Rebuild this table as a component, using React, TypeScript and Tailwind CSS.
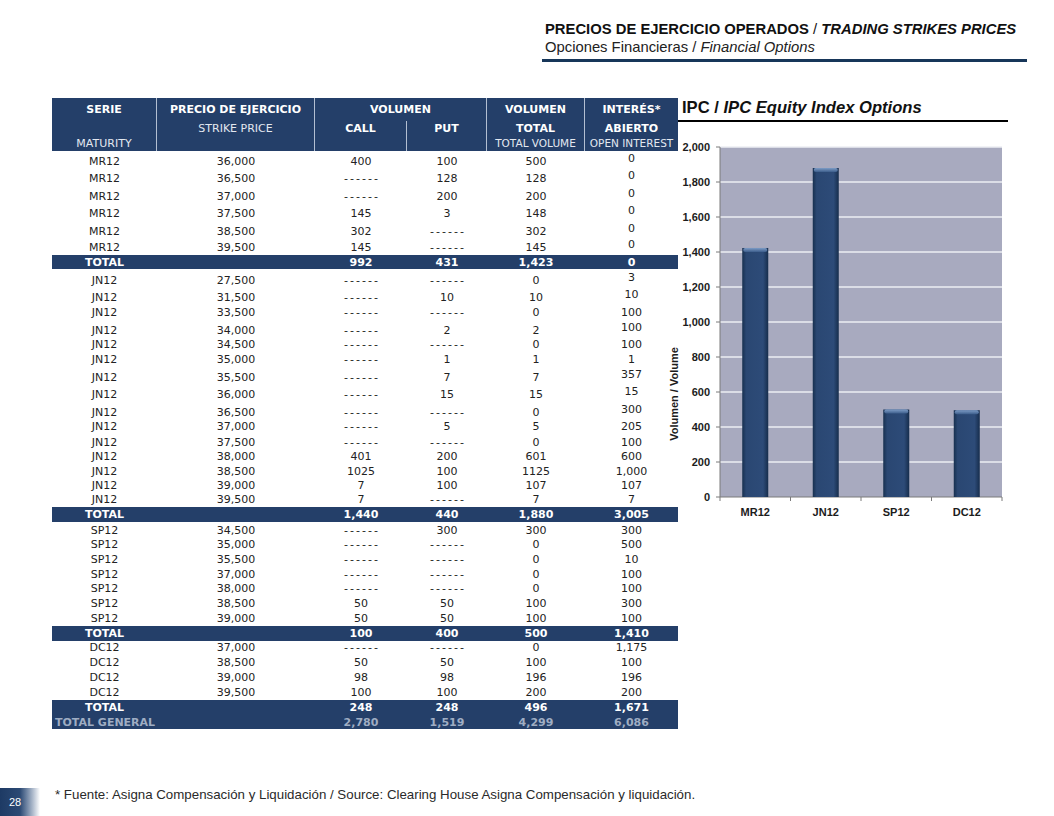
type Row = {
  strike: string;
  call: string;
  put: string;
  total: string;
  oi: string;
  h: string;
  up?: boolean;
};

type Section = {
  serie: string;
  rows: Row[];
  totals: [string, string, string, string];
  totalH: string;
};

const D = "------";

const sections: Section[] = [
  {
    serie: "MR12",
    totalH: "h-[14px]",
    totals: ["992", "431", "1,423", "0"],
    rows: [
      { strike: "36,000", call: "400", put: "100", total: "500", oi: "0", h: "h-[18px]", up: true },
      { strike: "36,500", call: D, put: "128", total: "128", oi: "0", h: "h-[17px]", up: true },
      { strike: "37,000", call: D, put: "200", total: "200", oi: "0", h: "h-[18px]", up: true },
      { strike: "37,500", call: "145", put: "3", total: "148", oi: "0", h: "h-[17px]", up: true },
      { strike: "38,500", call: "302", put: D, total: "302", oi: "0", h: "h-[18px]", up: true },
      { strike: "39,500", call: "145", put: D, total: "145", oi: "0", h: "h-[16px]", up: true },
    ],
  },
  {
    serie: "JN12",
    totalH: "h-[15px]",
    totals: ["1,440", "440", "1,880", "3,005"],
    rows: [
      { strike: "27,500", call: D, put: D, total: "0", oi: "3", h: "h-[19px]", up: true },
      { strike: "31,500", call: D, put: "10", total: "10", oi: "10", h: "h-[17px]", up: true },
      { strike: "33,500", call: D, put: D, total: "0", oi: "100", h: "h-[15px]" },
      { strike: "34,000", call: D, put: "2", total: "2", oi: "100", h: "h-[18px]", up: true },
      { strike: "34,500", call: D, put: D, total: "0", oi: "100", h: "h-[14px]" },
      { strike: "35,000", call: D, put: "1", total: "1", oi: "1", h: "h-[15px]" },
      { strike: "35,500", call: D, put: "7", total: "7", oi: "357", h: "h-[18px]", up: true },
      { strike: "36,000", call: D, put: "15", total: "15", oi: "15", h: "h-[17px]", up: true },
      { strike: "36,500", call: D, put: D, total: "0", oi: "300", h: "h-[18px]", up: true },
      { strike: "37,000", call: D, put: "5", total: "5", oi: "205", h: "h-[14px]" },
      { strike: "37,500", call: D, put: D, total: "0", oi: "100", h: "h-[16px]" },
      { strike: "38,000", call: "401", put: "200", total: "601", oi: "600", h: "h-[14px]" },
      { strike: "38,500", call: "1025", put: "100", total: "1125", oi: "1,000", h: "h-[15px]" },
      { strike: "39,000", call: "7", put: "100", total: "107", oi: "107", h: "h-[14px]" },
      { strike: "39,500", call: "7", put: D, total: "7", oi: "7", h: "h-[14px]" },
    ],
  },
  {
    serie: "SP12",
    totalH: "h-[15px]",
    totals: ["100", "400", "500", "1,410"],
    rows: [
      { strike: "34,500", call: D, put: "300", total: "300", oi: "300", h: "h-[16px]" },
      { strike: "35,000", call: D, put: D, total: "0", oi: "500", h: "h-[14px]" },
      { strike: "35,500", call: D, put: D, total: "0", oi: "10", h: "h-[15px]" },
      { strike: "37,000", call: D, put: D, total: "0", oi: "100", h: "h-[15px]" },
      { strike: "38,000", call: D, put: D, total: "0", oi: "100", h: "h-[14px]" },
      { strike: "38,500", call: "50", put: "50", total: "100", oi: "300", h: "h-[15px]" },
      { strike: "39,000", call: "50", put: "50", total: "100", oi: "100", h: "h-[15px]" },
    ],
  },
  {
    serie: "DC12",
    totalH: "h-[15px]",
    totals: ["248", "248", "496", "1,671"],
    rows: [
      { strike: "37,000", call: D, put: D, total: "0", oi: "1,175", h: "h-[14px]" },
      { strike: "38,500", call: "50", put: "50", total: "100", oi: "100", h: "h-[15px]" },
      { strike: "39,000", call: "98", put: "98", total: "196", oi: "196", h: "h-[15px]" },
      { strike: "39,500", call: "100", put: "100", total: "200", oi: "200", h: "h-[15px]" },
    ],
  },
];

const cols = "grid grid-cols-[105px_158px_92px_80px_98px_93px]";

function Cell({ v, up }: { v: string; up?: boolean }) {
  const dash = v === D;
  return (
    <div className={`text-center pb-[1px] ${up ? "-translate-y-[3px]" : ""}`}>
      <span className={dash ? "tracking-[2px] pl-[2px]" : ""}>{v}</span>
    </div>
  );
}

function TableHeader() {
  return (
    <div className="flex h-[53px] bg-[#243f69] text-white leading-none">
      <div className="w-[105px] flex flex-col border-r border-[#b3bfd2]">
        <div className="h-[23px] flex items-center justify-center font-bold">SERIE</div>
        <div className="h-[15px]" />
        <div className="h-[15px] flex items-center justify-center text-[#e3e8f0]">MATURITY</div>
      </div>
      <div className="w-[158px] flex flex-col border-r border-[#b3bfd2]">
        <div className="h-[23px] flex items-center justify-center font-bold">PRECIO DE EJERCICIO</div>
        <div className="h-[15px] flex items-center justify-center text-[#e3e8f0]">STRIKE PRICE</div>
      </div>
      <div className="w-[172px] flex flex-col border-r border-[#b3bfd2]">
        <div className="h-[23px] flex items-center justify-center font-bold">VOLUMEN</div>
        <div className="flex flex-1">
          <div className="w-[92px] border-r border-[#b3bfd2]">
            <div className="h-[15px] flex items-center justify-center font-bold">CALL</div>
          </div>
          <div className="flex-1">
            <div className="h-[15px] flex items-center justify-center font-bold">PUT</div>
          </div>
        </div>
      </div>
      <div className="w-[98px] flex flex-col border-r border-[#b3bfd2]">
        <div className="h-[23px] flex items-center justify-center font-bold">VOLUMEN</div>
        <div className="h-[15px] flex items-center justify-center font-bold">TOTAL</div>
        <div className="h-[15px] flex items-center justify-center text-[#e3e8f0] text-[10.5px]">TOTAL VOLUME</div>
      </div>
      <div className="w-[93px] flex flex-col">
        <div className="h-[23px] flex items-center justify-center font-bold">INTERÉS*</div>
        <div className="h-[15px] flex items-center justify-center font-bold">ABIERTO</div>
        <div className="h-[15px] flex items-center justify-center text-[#e3e8f0] text-[10.5px] whitespace-nowrap">OPEN INTEREST</div>
      </div>
    </div>
  );
}

function OptionsTable() {
  return (
    <div className="w-[626px] font-['DejaVu_Sans',sans-serif] text-[11px]">
      <TableHeader />
      {sections.map((sec) => (
        <div key={sec.serie}>
          {sec.rows.map((r) => (
            <div key={r.strike} className={`${cols} ${r.h} items-end leading-[13px] text-[#222]`}>
              <Cell v={sec.serie} />
              <Cell v={r.strike} />
              <Cell v={r.call} />
              <Cell v={r.put} />
              <Cell v={r.total} />
              <Cell v={r.oi} up={r.up} />
            </div>
          ))}
          <div className={`${cols} ${sec.totalH} items-center bg-[#243f69] text-white font-bold leading-none`}>
            <div className="text-center">TOTAL</div>
            <div />
            {sec.totals.map((t, i) => (
              <div key={i} className="text-center">
                {t}
              </div>
            ))}
          </div>
        </div>
      ))}
      <div className={`${cols} h-[14px] items-center bg-[#243f69] text-[#9fadc3] font-bold leading-none`}>
        <div className="col-span-2 pl-[3px]">TOTAL GENERAL</div>
        {["2,780", "1,519", "4,299", "6,086"].map((t) => (
          <div key={t} className="text-center">
            {t}
          </div>
        ))}
      </div>
    </div>
  );
}

const bars = [
  { label: "MR12", v: 1423 },
  { label: "JN12", v: 1880 },
  { label: "SP12", v: 500 },
  { label: "DC12", v: 496 },
];

function VolumeChart() {
  const X0 = 60;
  const Y0 = 9;
  const W = 282;
  const H = 350;
  const cat = W / bars.length;
  const yOf = (v: number) => Y0 + H - (v / 2000) * H;
  const ticks = [0, 200, 400, 600, 800, 1000, 1200, 1400, 1600, 1800, 2000];

  return (
    <svg width="350" height="390" className="-ml-[18px] mt-[16px] font-['Liberation_Sans',Arial,sans-serif]">
      <defs>
        <linearGradient id="barBody" x1="0" x2="1" y1="0" y2="0">
          <stop offset="0" stopColor="#17304f" />
          <stop offset="0.15" stopColor="#2a4772" />
          <stop offset="0.8" stopColor="#2d4b78" />
          <stop offset="1" stopColor="#162d4c" />
        </linearGradient>
        <linearGradient id="barCap" x1="0" x2="0" y1="0" y2="1">
          <stop offset="0" stopColor="#7d9cc6" />
          <stop offset="1" stopColor="#3d5e8c" />
        </linearGradient>
      </defs>
      <rect x={X0} y={Y0} width={W} height={H} fill="#a8aabf" />
      {ticks.map((t) => (
        <g key={t}>
          {t > 0 && <line x1={X0} x2={X0 + W} y1={yOf(t)} y2={yOf(t)} stroke="#eceef3" strokeWidth="1.5" />}
          <line x1={X0 - 4} x2={X0} y1={yOf(t)} y2={yOf(t)} stroke="#7a7a7a" />
          <text x={50} y={yOf(t) + 4} textAnchor="end" fontSize="11" fontWeight="bold" fill="#1c1c1c">
            {t.toLocaleString("en-US")}
          </text>
        </g>
      ))}
      <line x1={X0} x2={X0} y1={Y0} y2={Y0 + H} stroke="#7a7a7a" />
      <line x1={X0} x2={X0 + W} y1={Y0 + H} y2={Y0 + H} stroke="#7a7a7a" />
      {[0, 1, 2, 3, 4].map((i) => (
        <line key={i} x1={X0 + cat * i} x2={X0 + cat * i} y1={Y0 + H} y2={Y0 + H + 4} stroke="#7a7a7a" />
      ))}
      {bars.map((b, i) => {
        const cx = X0 + cat * (i + 0.5);
        const top = yOf(b.v);
        return (
          <g key={b.label}>
            <rect x={cx - 13} y={top} width={26} height={Y0 + H - top} fill="url(#barBody)" />
            <rect x={cx - 12} y={top} width={24} height={4} rx={2} fill="url(#barCap)" />
            <text x={cx} y={378} textAnchor="middle" fontSize="11" fontWeight="bold" fill="#1c1c1c">
              {b.label}
            </text>
          </g>
        );
      })}
      <text
        transform="translate(18 256) rotate(-90)"
        textAnchor="middle"
        fontSize="11"
        fontWeight="bold"
        fill="#1c1c1c"
      >
        Volumen / Volume
      </text>
    </svg>
  );
}

export default function App() {
  return (
    <div className="relative w-[1054px] h-[816px] bg-white flex flex-col overflow-hidden font-['Liberation_Sans',Arial,sans-serif] text-[#111]">
      {/* page title */}
      <div className="ml-[542px] mt-[20px] w-[485px] pb-[3px] border-b-[3px] border-[#173659] text-[14.8px] leading-[18px]">
        <div className="pl-[3px] whitespace-nowrap">
          <span className="font-bold">PRECIOS DE EJERCICIO OPERADOS</span> /{" "}
          <span className="font-bold italic">TRADING STRIKES PRICES</span>
        </div>
        <div className="pl-[3px] whitespace-nowrap text-[#222]">
          Opciones Financieras / <span className="italic">Financial Options</span>
        </div>
      </div>

      <div className="flex ml-[52px] mt-[36px]">
        <OptionsTable />
        <div className="w-[330px] flex flex-col pt-[1px]">
          <div className="pl-[4px] pb-[3px] border-b-2 border-black text-[16.6px] leading-[18px] font-bold whitespace-nowrap">
            IPC / <span className="italic">IPC Equity Index Options</span>
          </div>
          <VolumeChart />
        </div>
      </div>

      {/* footer */}
      <div className="mt-auto flex h-[28px]">
        <div className="w-[40px] h-full flex items-center pl-[9px] bg-gradient-to-r from-[#1d3a64] via-[#2c4a74] to-white text-white text-[11px]">
          28
        </div>
        <div className="ml-[15px] leading-[14px] text-[13.3px] text-[#2a2a2a] whitespace-nowrap">
          * Fuente: Asigna Compensación y Liquidación / Source: Clearing House Asigna Compensación y liquidación.
        </div>
      </div>
    </div>
  );
}
